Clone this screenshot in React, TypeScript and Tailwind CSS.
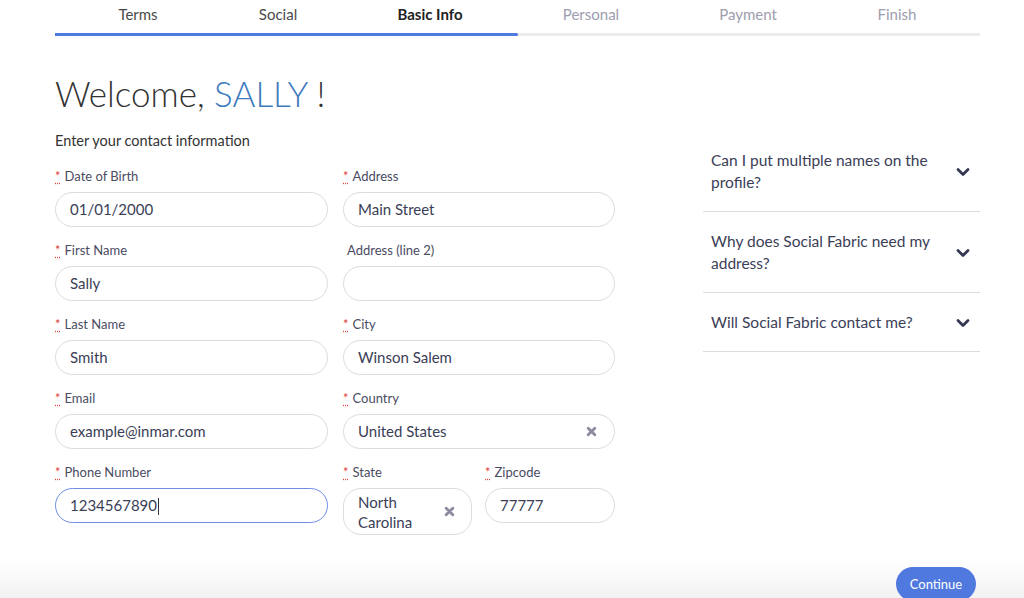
import React from "react";

const font = { fontFamily: "Lato, 'Noto Sans', sans-serif" };

function Req() {
  return (
    <span className="text-[#e0403a] underline decoration-dotted decoration-[#e0403a] underline-offset-2 mr-[4px]">*</span>
  );
}

function Label({ text, req }: { text: string; req?: boolean }) {
  return (
    <div className="h-[18px] leading-[18px] text-[13px] text-[#4a4c62] flex items-center">
      {req ? <Req /> : <span className="w-[4px]" />}
      <span>{text}</span>
    </div>
  );
}

function XIcon() {
  return (
    <svg width="11" height="11" viewBox="0 0 10 10" className="shrink-0">
      <path d="M2 2 L8 8 M8 2 L2 8" stroke="#8b8ca0" strokeWidth="2.6" strokeLinecap="round" />
    </svg>
  );
}

function Field({
  label,
  value,
  req,
  focused,
  clear,
}: {
  label: string;
  value: string;
  req?: boolean;
  focused?: boolean;
  clear?: boolean;
}) {
  return (
    <div className="flex flex-col">
      <Label text={label} req={req} />
      <div
        className={
          "mt-[7px] h-[35px] rounded-[18px] border flex items-center pl-[14px] pr-[17px] text-[15px] text-[#3b3e57] " +
          (focused ? "border-[#6e8ee3]" : "border-[#dcdcdc]")
        }
      >
        <span className="flex-1">
          {value}
          {focused ? <span className="inline-block w-px h-[17px] bg-[#333] align-middle ml-px -mt-[2px]" /> : null}
        </span>
        {clear ? <XIcon /> : null}
      </div>
    </div>
  );
}

function Chevron() {
  return (
    <svg width="14" height="10" viewBox="0 0 14 10" className="shrink-0 mt-[2px]">
      <path d="M2 2.5 L7 7.5 L12 2.5" fill="none" stroke="#353852" strokeWidth="2.8" strokeLinecap="round" strokeLinejoin="round" />
    </svg>
  );
}

function Faq({ q }: { q: string }) {
  return (
    <div className="flex items-center justify-between py-[18px] pl-[8px] pr-[10px] border-b border-[#dddddd]">
      <div className="text-[15.5px] leading-[22px] text-[#3b3e57] w-[232px]">{q}</div>
      <Chevron />
    </div>
  );
}

export default function App() {
  const tabs = [
    { t: "Terms", c: "text-[#4a4a4a]" },
    { t: "Social", c: "text-[#4a4a4a]" },
    { t: "Basic Info", c: "text-[#222] font-bold" },
    { t: "Personal", c: "text-[#9d9db0]" },
    { t: "Payment", c: "text-[#9d9db0]" },
    { t: "Finish", c: "text-[#9d9db0]" },
  ];
  return (
    <div className="w-[1024px] h-[598px] bg-white overflow-hidden flex flex-col" style={font}>
      <div className="pl-[55px] pr-[44px]">
        <div className="grid grid-cols-[166px_114px_190px_132px_182px_116px] pt-[4px]">
          {tabs.map((x) => (
            <div key={x.t} className={"text-center text-[15px] leading-[20px] whitespace-nowrap " + x.c}>
              {x.t}
            </div>
          ))}
        </div>
        <div className="mt-[9px] h-[3px] bg-[#ebebeb] flex">
          <div className="w-1/2 bg-[#4f79de] rounded-r-[2px]" />
        </div>
        <h1 className="mt-[36px] text-[35px] leading-[42px] font-light text-[#333333]">
          Welcome, <span className="text-[#3d7bbd]">SALLY</span> !
        </h1>
        <div className="mt-[17px] flex">
          <div className="w-[560px]">
            <div className="text-[14.5px] leading-[20px] text-[#333]">Enter your contact information</div>
            <div className="mt-[16px] grid grid-cols-[273px_272px] gap-x-[15px] gap-y-[14px]">
              <Field label="Date of Birth" value="01/01/2000" req />
              <Field label="Address" value="Main Street" req />
              <Field label="First Name" value="Sally" req />
              <Field label="Address (line 2)" value="" />
              <Field label="Last Name" value="Smith" req />
              <Field label="City" value="Winson Salem" req />
              <Field label="Email" value="example@inmar.com" req />
              <Field label="Country" value="United States" req clear />
              <Field label="Phone Number" value="1234567890" req focused />
              <div className="grid grid-cols-[129px_130px] gap-x-[13px]">
                <div className="flex flex-col">
                  <Label text="State" req />
                  <div className="mt-[7px] h-[47px] rounded-[18px] border border-[#dcdcdc] flex items-center pl-[14px] pr-[16px] text-[15px] leading-[20px] text-[#3b3e57]">
                    <span className="flex-1">
                      North
                      <br />
                      Carolina
                    </span>
                    <XIcon />
                  </div>
                </div>
                <Field label="Zipcode" value="77777" req />
              </div>
            </div>
          </div>
          <div className="ml-[88px] w-[277px]">
            <Faq q="Can I put multiple names on the profile?" />
            <Faq q="Why does Social Fabric need my address?" />
            <Faq q="Will Social Fabric contact me?" />
          </div>
        </div>
      </div>
      <div className="mt-auto h-[40px] bg-gradient-to-b from-white to-[#f2f2f2] flex justify-end items-start pr-[48px] pt-[9px]">
        <button className="w-[80px] h-[34px] rounded-full bg-[#4f79de] text-white text-[13px] leading-[32px]">
          Continue
        </button>
      </div>
    </div>
  );
}
